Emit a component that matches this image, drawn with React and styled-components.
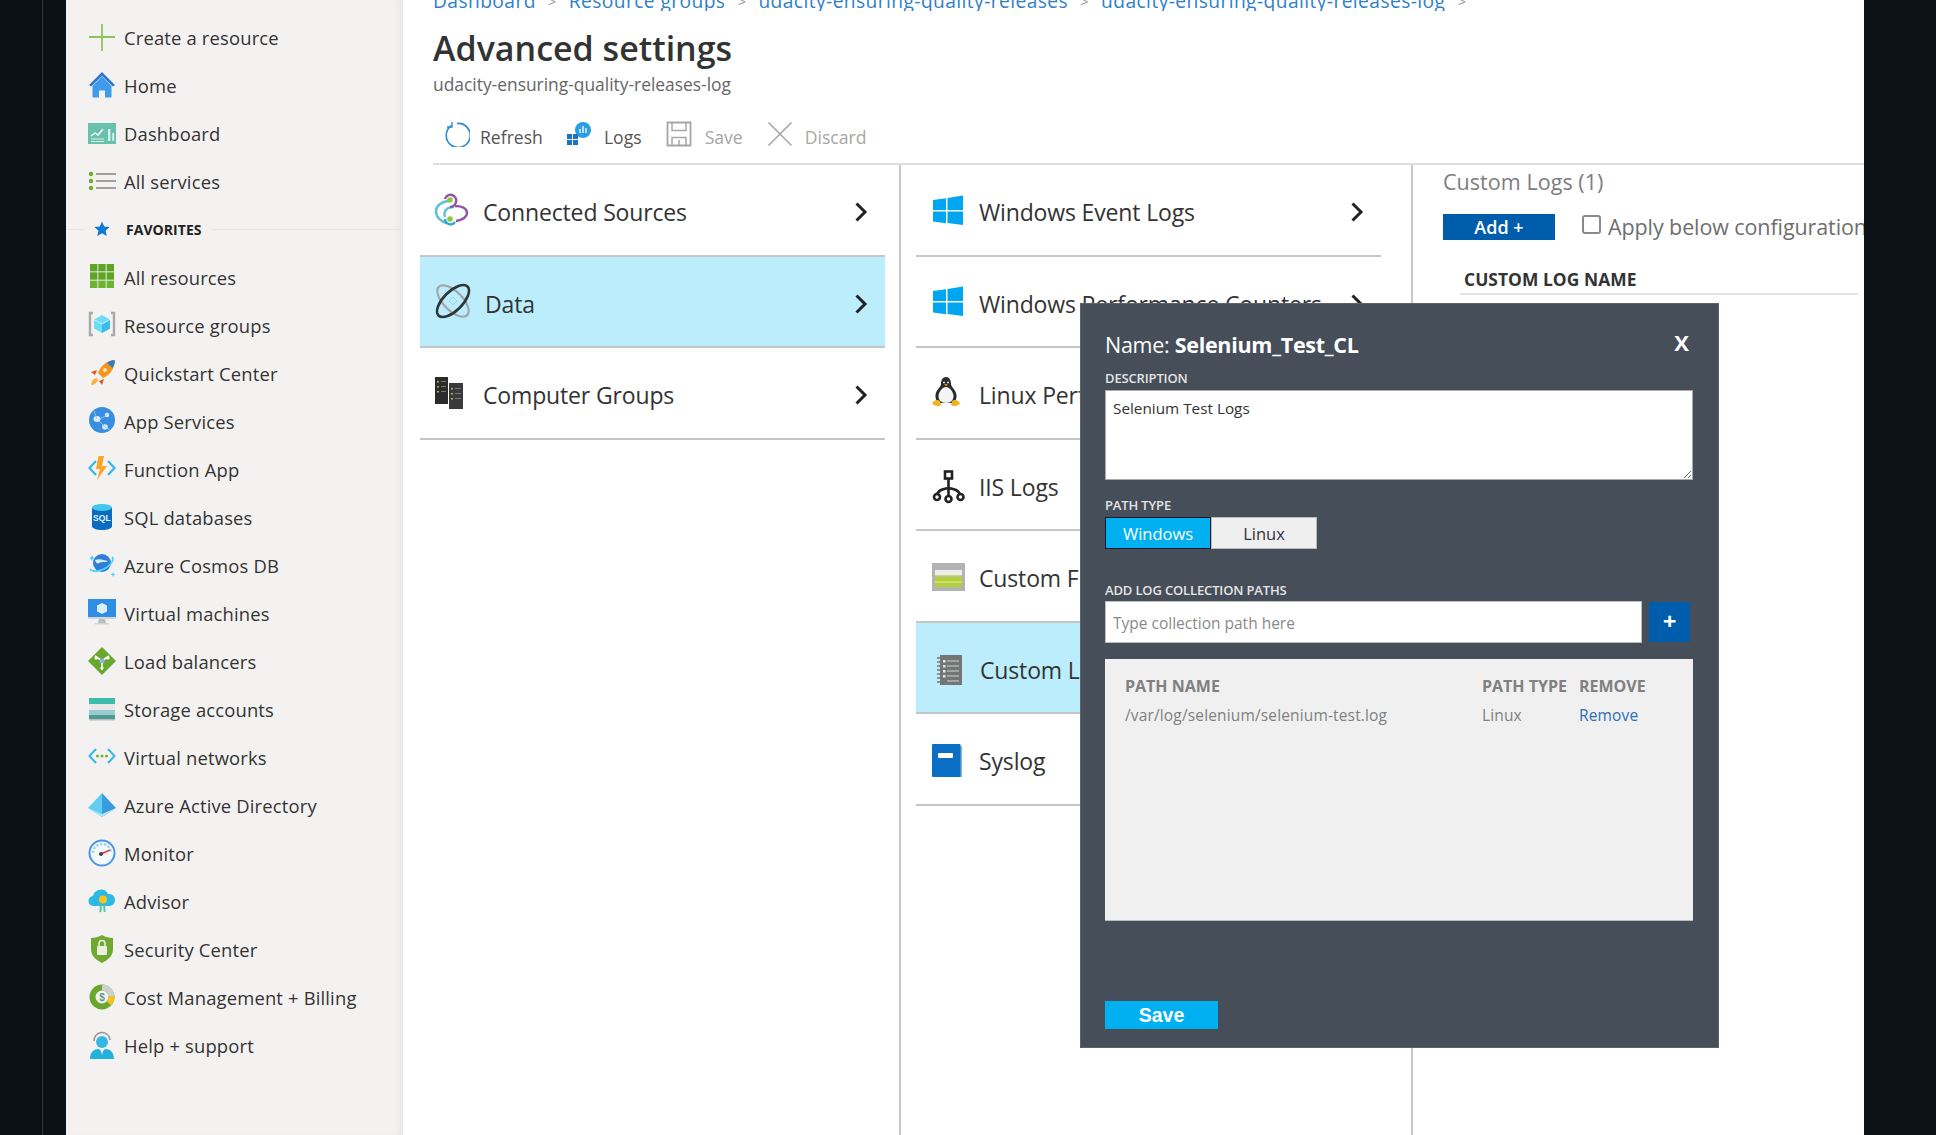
import React from "react";
import styled, { createGlobalStyle } from "styled-components";

const Global = createGlobalStyle`
  html, body { margin: 0; padding: 0; background: #0c1017; }
  * { box-sizing: border-box; }
  body { font-family: "Open Sans", "Noto Sans", sans-serif; }
`;

const Page = styled.div`
  display: flex; width: 1936px; height: 1135px; overflow: hidden; background: #0c1017; position: relative;
`;
const Gutter = styled.div`
  width: 66px; flex: none;
  &::before { content: ""; display: block; width: 42px; height: 100%; border-right: 1px solid #33363c; }
`;
const RightGutter = styled.div`width: 72px; flex: none; background: #0d1118;`;

const Sidebar = styled.nav`
  width: 337px; flex: none; background: #f3f2f1; padding-top: 14px;
  box-shadow: inset -8px 0 8px -6px rgba(0,0,0,.07);
`;
const NavRow = styled.div`
  display: flex; align-items: center; height: 48px; padding-left: 22px; gap: 8px;
  color: #333; font-size: 18.4px; letter-spacing: 0.17px; white-space: nowrap;
`;
const NavIcon = styled.svg`width: 28px; height: 28px; flex: none; position: relative; top: -1px;`;
const NavLabel = styled.span`position: relative; top: -1px;`;
const FavRow = styled.div`
  display: flex; align-items: center; height: 46px; margin-bottom: 2px; gap: 9px;
  color: #222; font-size: 14px; font-weight: 700; letter-spacing: 0.05px;
  &::before { content: ""; width: 19px; height: 1px; background: #e8e7e6; }
  &::after { content: ""; flex: 1; height: 1px; background: #e8e7e6; }
`;
const FavStar = styled.svg`width: 16px; height: 16px; margin-right: 7px; flex: none;`;

const Main = styled.main`flex: 1; min-width: 0; background: #fff; display: flex; flex-direction: column; position: relative;`;
const Crumbs = styled.div`
  height: 11px; margin-left: 30px; display: flex; align-items: flex-end; gap: 12px; overflow: hidden;
  color: #2f80c8; font-size: 19.2px; letter-spacing: 0.42px; line-height: 20px; white-space: nowrap;
`;
const CrumbSep = styled.span`color: #999; font-size: 15px;`;
const Title = styled.h1`
  margin: 15px 0 0 30px; height: 44px; line-height: 44px; font-size: 34px; font-weight: 600; color: #333; letter-spacing: 0;
`;
const Subtitle = styled.div`
  margin: 2px 0 0 30px; height: 24px; line-height: 24px; font-size: 17.4px; color: #666; letter-spacing: 0;
`;
const Toolbar = styled.div`
  margin: 17px 0 0 30px; height: 52px; border-bottom: 2px solid #e0e0e0; display: flex; padding: 5px 0 0 11px;
`;
const ToolBtn = styled.div`
  display: flex; align-items: flex-start; margin-right: ${p => p.$mr}px; color: ${p => (p.$off ? "#a6a6a6" : "#555")};
  font-size: 17.6px; letter-spacing: 0; gap: ${p => p.$gap}px; line-height: 38px;
`;
const ToolIcon = styled.svg`width: 26px; height: 26px; flex: none; margin-top: 3px;`;

const Columns = styled.div`flex: 1; display: flex; margin-left: 17px; min-height: 0;`;
const Col1 = styled.section`width: 481px; flex: none; border-right: 2px solid #c8c8c8;`;
const Col2 = styled.section`width: 512px; flex: none; padding-left: 15px; border-right: 2px solid #c8c8c8;`;
const Col3 = styled.section`flex: 1; min-width: 0; padding-left: 30px; overflow: hidden;`;
const List = styled.div`width: 465px;`;
const Row = styled.div`
  display: flex; align-items: center; height: 91.5px; border-bottom: 2px solid #c6c6c6; padding: 0 17px 0 ${p => p.$pad ?? 15}px;
  background: ${p => (p.$active ? "#bcedfd" : "transparent")};
  color: #333; font-size: 23px; letter-spacing: -0.15px; white-space: nowrap;
`;
const RowIcon = styled.svg`width: 34px; height: 34px; flex: none; overflow: visible;`;
const RowText = styled.span`margin-left: ${p => p.$ml}px; flex: 1; padding-top: 5px;`;
const Chevron = styled.svg`width: 14px; height: 20px; flex: none; margin-top: 5px;`;

const LogsTitle = styled.div`height: 34px; line-height: 34px; font-size: 21.5px; color: #7d7d7d; letter-spacing: 0.05px;`;
const AddRow = styled.div`display: flex; align-items: center; margin-top: 14px; height: 27px; white-space: nowrap;`;
const AddBtn = styled.button`
  width: 112px; height: 26px; border: 0; background: #005dab; color: #fff; font: 600 18px "Open Sans", sans-serif; padding: 0; flex: none; line-height: 26px;
`;
const Check = styled.span`
  width: 19px; height: 19px; border: 2px solid #8a8a8a; border-radius: 3px; background: #fff; margin-left: 27px; flex: none; position: relative; top: -2px;
`;
const ApplyText = styled.span`margin-left: 7px; color: #6e6e6e; font-size: 21.5px; letter-spacing: -0.1px;`;
const LogHead = styled.div`
  margin: 26px 0 0 17px; width: 398px; height: 29px; border-bottom: 2px solid #e4e4e4; padding-left: 4px;
  font-size: 17.4px; font-weight: 700; color: #333; line-height: 26px; letter-spacing: 0.05px;
`;

const Modal = styled.div`
  position: absolute; left: 677px; top: 303px; width: 639px; height: 745px; background: #464e59; padding: 0 25px 0 24px;
  border: 1px solid #5b626c; color: #fff; display: flex; flex-direction: column;
`;
const ModalHead = styled.div`
  margin-top: 25px; height: 30px; display: flex; justify-content: space-between; align-items: center; font-size: 21.5px; letter-spacing: -0.28px; padding-right: 4px;
  b { font-weight: 700; }
`;
const Close = styled.span`font-size: 22px; font-weight: 700; letter-spacing: 0; position: relative; top: -2px;`;
const Label = styled.label`
  display: block; height: 16px; line-height: 16px; font-size: 13px; font-weight: 600; color: #e4e4e4; letter-spacing: -0.15px;
  margin: ${p => p.$mt}px 0 ${p => p.$mb}px;
`;
const Area = styled.textarea`
  display: block; width: 588px; height: 90px; border: 1px solid #aaa; padding: 7px 7px; margin: 0; font: 15.3px "Open Sans", sans-serif; letter-spacing: 0; color: #333; background: #fff; outline: 0;
`;
const Seg = styled.div`display: flex;`;
const SegBtn = styled.button`
  width: 106px; height: 32px; padding: 0; font: 16.5px "Open Sans", sans-serif; letter-spacing: 0;
  background: ${p => (p.$on ? "#00b0f0" : "#efefef")}; color: ${p => (p.$on ? "#fff" : "#333")};
  border: ${p => (p.$on ? "1px solid #0a1a2a" : "1px solid #bbb")};
`;
const PathRow = styled.div`display: flex; height: 42px; gap: 7px; align-items: center;`;
const PathInput = styled.input`
  width: 537px; height: 42px; border: 1px solid #bbb; padding: 2px 7px 0; font: 15.5px "Open Sans", sans-serif; letter-spacing: 0; background: #fff; outline: 0; color: #333;
  &::placeholder { color: #8a8a8a; opacity: 1; }
`;
const PlusBtn = styled.button`
  width: 41px; height: 40px; border: 0; background: #005dab; color: #fff; font: 700 24px "Open Sans", sans-serif; padding: 0 0 4px;
`;
const PathBox = styled.div`
  margin-top: 16px; width: 588px; height: 262px; background: #f0f0f0; border-bottom: 1px solid #bbb; padding: 16px 20px 0;
`;
const PathGrid = styled.div`
  display: grid; grid-template-columns: 357px 97px auto; row-gap: 6px; color: #808080; font-size: 15.5px; letter-spacing: 0.15px; line-height: 23px;
`;
const PathTh = styled.div`font-size: 16px; font-weight: 700; letter-spacing: 0; color: #808080; white-space: nowrap;`;
const RemoveLink = styled.a`color: #2a6fb5;`;
const SaveBtn = styled.button`
  margin-top: 80px; width: 113px; height: 28px; border: 0; background: #00b0f0; color: #fff; font: 700 19.5px "Liberation Sans", sans-serif; padding: 0;
`;

const I = {
  plus: <g stroke="#8fc25c" strokeWidth="1.8"><path d="M14 1v27M1 14h26"/></g>,
  home: <g><path d="M14 1 1 14l2.2 1.5L14 5l10.8 10.500L27 14z" fill="#2878d0"/><path d="M4.500 15 14 5.600 23.500 15v10.500a1 1 0 0 1-1 1h-17a1 1 0 0 1-1-1z" fill="#3f9cec"/><path d="M11 27v-7.500h6V27z" fill="#f3f2f1"/></g>,
  dash: <g transform="translate(0 3)"><rect y="1" width="28" height="21" fill="#67c1ac"/><path d="M3 14l4-3 3 2 5-6" stroke="#fff" strokeWidth="1.400" fill="none"/><path d="M3 17h13M3 19.500h13" stroke="#d9f1ea" strokeWidth="1"/><path d="M20 19V7h2.400v12zM24.200 19v-8h2v8z" fill="#d9f1ea"/></g>,
  list: <g transform="translate(0 3)"><g fill="#6fae2c"><circle cx="3" cy="4" r="2.200"/><circle cx="3" cy="11" r="2.200"/><circle cx="3" cy="18" r="2.200"/></g><path d="M8 4h20M8 11h20M8 18h20" stroke="#a0a0a0" strokeWidth="1.800"/></g>,
  grid: <g fill="#5ea527"><rect x="2" y="1" width="7.400" height="7.400"/><rect x="10.300" y="1" width="7.400" height="7.400"/><rect x="18.600" y="1" width="7.400" height="7.400"/><rect x="2" y="9.300" width="7.400" height="7.400"/><rect x="10.300" y="9.300" width="7.400" height="7.400"/><rect x="18.600" y="9.300" width="7.400" height="7.400"/><rect x="2" y="17.600" width="7.400" height="7.400" fill="#6cb331"/><rect x="10.300" y="17.600" width="7.400" height="7.400" fill="#6cb331"/><rect x="18.600" y="17.600" width="7.400" height="7.400" fill="#6cb331"/></g>,
  group: <g><path d="M5 2H2v22h3M23 2h3v22h-3" stroke="#a9a9a9" strokeWidth="2.400" fill="none"/><path d="M14 4l8 4.500v9L14 22l-8-4.500v-9z" fill="#6fdcf7"/><path d="M14 13l8-4.500v9L14 22z" fill="#3cb9ee"/><path d="M6 8.500 14 13l8-4.500" stroke="#c9f3fd" strokeWidth="1" fill="none"/></g>,
  rocket: <g><path d="M26 1c-7 1-13 5-16 13l5 5c7-3 11-9 12-16z" fill="#f7941d"/><path d="M26 1c-3 .5-5 1.400-7 2.800L24.500 9C25.800 7 26.500 4.500 27 1.500z" fill="#2c7fc5"/><path d="M9 11l-6 2 4 3zM16 20l-2 6-3-4z" fill="#e8541f"/><path d="M8 19c-3 1-5 4-5 7 3 0 6-2 7-5z" fill="#fbb040"/><circle cx="17" cy="11" r="2" fill="#fde3b8"/></g>,
  app: <g><circle cx="14" cy="13" r="13" fill="#3a8ee0"/><ellipse cx="9" cy="12" rx="3.500" ry="3" fill="#d8ebfa"/><circle cx="19" cy="8" r="2.200" fill="#d8ebfa"/><circle cx="17" cy="20" r="2.800" fill="#d8ebfa"/><path d="M12 12l7-4M11 14l6 6M6 4l3 8M22 23l-5-3" stroke="#9fcbf1" strokeWidth=".8"/></g>,
  func: <g><path d="M8 6 1.500 13 8 20M20 6l6.500 7L20 20" stroke="#37b7ee" strokeWidth="2.200" fill="none"/><path d="M16 1H10.500L8 14h4l-3 11 10-14h-5z" fill="#f9a825"/></g>,
  sql: <g><path d="M4 4v19c0 2.500 4.500 4 10 4s10-1.500 10-4V4z" fill="#0a6cbf"/><ellipse cx="14" cy="4.500" rx="10" ry="3.500" fill="#42c8ef"/><text x="14" y="18" textAnchor="middle" fontSize="8.500" fontWeight="700" fill="#e3f1fb" fontFamily="Liberation Sans">SQL</text></g>,
  cosmos: <g><circle cx="14" cy="12" r="9" fill="#2f7fd6"/><path d="M7 9c4-2 9 0 13 1-2 2-6 0-9 2-2 1-3 0-4-3z" fill="#d4ecfb"/><path d="M24 6c3 3-2 9-8 12S4 21 2 18" stroke="#52d4f6" strokeWidth="1.800" fill="none"/><path d="M4 4l1 2 2 1-2 1-1 2-1-2-2-1 2-1zM25 21l.8 1.800 1.700.7-1.700.7-.8 1.800-.8-1.800-1.700-.7 1.700-.7z" fill="#52d4f6"/></g>,
  vm: <g><path d="M11 20h6l1 4h-8z" fill="#bcbcbc"/><path d="M7 24h14v1.500H7z" fill="#d4d4d4"/><rect width="28" height="20" fill="#2f8ee4"/><rect y="18" width="28" height="2" fill="#cfd8e0"/><path d="M14 4l5 2.500v6L14 15l-5-2.500v-6z" fill="#d8effc"/></g>,
  lb: <g><path d="M14 0 28 14 14 28 0 14z" fill="#6aa82d"/><circle cx="14" cy="14" r="2.500" fill="#8fb6e8"/><path d="M14 16v7M7 9l5 3.500M21 9l-5 3.500" stroke="#fff" strokeWidth="1.600"/><circle cx="14" cy="21" r="1.600" fill="#fff"/><circle cx="8" cy="11" r="1.500" fill="#fff"/><circle cx="20" cy="11" r="1.500" fill="#fff"/></g>,
  storage: <g transform="translate(0 2)"><rect x="1" y="1" width="26" height="6" fill="#3cbcab"/><rect x="1" y="7" width="26" height="6" fill="#e8e8e8"/><rect x="1" y="13" width="26" height="5" fill="#9cc"/><rect x="1" y="18" width="26" height="4" fill="#4c9c92"/><rect x="1" y="22" width="26" height="1.500" fill="#bbb"/></g>,
  vnet: <g transform="translate(0 3)"><path d="M8 3 1.500 10 8 17M20 3l6.500 7L20 17" stroke="#37b7ee" strokeWidth="2" fill="none"/><circle cx="9.500" cy="10" r="1.500" fill="#6cb331"/><circle cx="14" cy="10" r="1.500" fill="#6cb331"/><circle cx="18.500" cy="10" r="1.500" fill="#6cb331"/></g>,
  aad: <g transform="translate(0 2)"><path d="M14 0 0 15l14 9z" fill="#62cdf3"/><path d="M14 0l14 15-14 9z" fill="#3a9ce0"/><path d="M0 15 14 21l14-6-14 9z" fill="#a9e4f8"/></g>,
  monitor: <g><circle cx="14" cy="14" r="12.500" fill="#f6f9fc" stroke="#4a96e6" strokeWidth="2"/><path d="M5 14a9 9 0 0 1 18 0" stroke="#9dd7f3" strokeWidth="2.500" fill="none" strokeDasharray="2.500 1.500"/><path d="M13 15l9-4" stroke="#d5413c" strokeWidth="1.400"/><circle cx="13" cy="15" r="2" fill="#444"/></g>,
  advisor: <g><path d="M6 19a5 5 0 0 1-1-10 8 8 0 0 1 15-2 6 6 0 0 1 2 12z" fill="#2cb9e6"/><rect x="15" y="18" width="2" height="7" fill="#54c7a8" transform="rotate(-6 15 18)"/><rect x="12" y="18" width="2" height="7" fill="#54c7a8" transform="rotate(6 12 18)"/><circle cx="16" cy="12" r="6" fill="#2cb9e6"/><circle cx="15" cy="12.500" r="4" fill="#fcc419"/></g>,
  shield: <g><path d="M14 0c3 2 7 3 11 3v11c0 7-5 11-11 14C8 25 3 21 3 14V3c4 0 8-1 11-3z" fill="#6fa92f"/><rect x="9" y="11" width="10" height="9" rx="1" fill="#e9f1dc"/><path d="M11 11V8.500a3 3 0 0 1 6 0V11" stroke="#e9f1dc" strokeWidth="1.600" fill="none"/></g>,
  cost: <g><circle cx="14" cy="14" r="9.500" fill="none" stroke="#6aa82d" strokeWidth="6"/><path d="M14 4.500A9.500 9.500 0 0 1 23.400 13" stroke="#cfcfcf" strokeWidth="6" fill="none"/><path d="M23.400 13A9.500 9.500 0 0 1 21 20.500" stroke="#fac020" strokeWidth="6" fill="none"/><text x="14" y="18" textAnchor="middle" fontSize="10" fontWeight="700" fill="#5a9b8c" fontFamily="Liberation Sans">$</text></g>,
  help: <g><path d="M6 10a8 8 0 0 1 16-1" stroke="#9a9a9a" strokeWidth="1.600" fill="none"/><circle cx="14" cy="11" r="6" fill="#34b7e4"/><path d="M2 28c0-7 4-10 9-10l3 3 3-3c5 0 9 3 9 10z" fill="#22b0dc"/><path d="M13 20h2l-1 4z" fill="#f3f2f1"/></g>,
  win: <g fill="#00a6ef"><path d="M1 7l13-1.800V17H1zM15.500 5 31 2.500V17H15.500zM1 18.500h13v11.800L1 28.500zM15.500 18.500H31V32l-15.500-2z"/></g>,
  linux: <g><path d="M17 1c-4 0-5 4-5 7 0 3-5 6-5.500 11-.4 4 2 8 3 8h15c1 0 3.400-4 3-8-.5-5-5.500-8-5.500-11 0-3-1-7-5-7z" fill="#2a2a2a"/><path d="M17 11c-3.500 0-7.500 5-7.500 9s2.500 7 7.500 7 7.500-3 7.500-7-4-9-7.500-9z" fill="#f4f4f4"/><path d="M14 6.500h2M18 6.500h2" stroke="#ddd" strokeWidth="1.300"/><path d="M15 8.500l2 1.500 2-1.500-2-.5z" fill="#e8a71c"/><path d="M3 27c2-3 6-4 8-2l1 4c-2 2-8 1-9-2zM31 27c-2-3-6-4-8-2l-1 4c2 2 8 1 9-2z" fill="#eeb41f"/></g>,
  iis: <g fill="none" stroke="#222" strokeWidth="2.600"><rect x="13" y="1.500" width="7" height="7"/><path d="M16.500 8.500v17M5 25c1-5 6-6 11.500-7 5.500 1 10.500 2 11.500 7"/><circle cx="5" cy="27" r="3"/><circle cx="16.500" cy="29" r="3"/><circle cx="28.500" cy="27" r="3"/></g>,
  fields: <g><rect y="1" width="33" height="28" fill="#b3b3b3"/><rect x="3" y="8" width="27" height="5" fill="#ededed"/><rect x="3" y="13" width="27" height="1.500" fill="#c7d57f"/><rect x="3" y="15" width="27" height="10" fill="#b5cf3b"/><rect x="3" y="19.500" width="27" height="1" fill="#e3edb0"/></g>,
  logs: <g><rect x="6" y="2" width="22" height="30" fill="#757575"/><path d="M3 5h6M3 9h6M3 13h6M3 17h6M3 21h6M3 25h6M3 29h6" stroke="#757575" strokeWidth="1.600"/><g stroke="#c8d6d6" strokeWidth="1.200"><path d="M13 8h12M13 13h12M13 18h12M13 23h12M13 28h12"/></g><g fill="#dfe8e8"><rect x="9" y="7" width="2.500" height="2.500"/><rect x="9" y="12" width="2.500" height="2.500"/><rect x="9" y="17" width="2.500" height="2.500"/><rect x="9" y="22" width="2.500" height="2.500"/></g></g>,
  syslog: <g><path d="M28 1v32h2V3z" fill="#7fb3dd"/><rect y="0" width="28.500" height="33" rx="1" fill="#0a6fc4"/><rect x="6" y="9" width="15" height="5" rx="1" fill="#fff"/></g>,
  conn: <g fill="none" strokeWidth="2.400"><path d="M13 8C6 9 1 13 1 18c0 6 5 11 11 12" stroke="#5cc0d8"/><path d="M10 26a5.500 5.500 0 0 0 10 3" stroke="#25a9c8"/><path d="M19 14c-7 0-11 4-9 10" stroke="#5cc0d8"/><path d="M10 6a5.500 5.500 0 0 1 11 3c0 3-4 5-6 5" stroke="#8f54a8"/><path d="M20 13c6 0 12 2 12 7s-6 7-11 8" stroke="#8f54a8"/><circle cx="15" cy="7" r="2.800" fill="#8ec63f" stroke="none"/><circle cx="15" cy="26" r="2.800" fill="#8ec63f" stroke="none"/></g>,
  data: <g fill="none"><ellipse cx="17" cy="17" rx="20" ry="9.500" transform="rotate(45 17 17)" stroke="#a2a7a8" strokeWidth="2.200"/><ellipse cx="17" cy="17" rx="20.500" ry="9.500" transform="rotate(-45 17 17)" stroke="#2f3638" strokeWidth="2.600"/><path d="M17 13l4 4-4 4-4-4z" stroke="#9ed4ea" strokeWidth="1"/></g>,
  comps: <g><rect y="1" width="13" height="27" fill="#2b2b2b"/><rect x="14" y="7" width="14" height="26" fill="#3a3a3a"/><g fill="#8ec63f"><rect x="2" y="5" width="2" height="1.500"/><rect x="2" y="10" width="2" height="1.500"/><rect x="2" y="15" width="2" height="1.500"/><rect x="16" y="12" width="2" height="1.500"/><rect x="16" y="17" width="2" height="1.500"/><rect x="16" y="22" width="2" height="1.500"/></g><path d="M6 5.500h5M6 10.500h5M6 15.500h5M20 12.500h6M20 17.500h6M20 22.500h6" stroke="#777" strokeWidth="1"/></g>,
};

const nav = [
  ["Create a resource", I.plus], ["Home", I.home], ["Dashboard", I.dash], ["All services", I.list],
  null,
  ["All resources", I.grid], ["Resource groups", I.group], ["Quickstart Center", I.rocket], ["App Services", I.app],
  ["Function App", I.func], ["SQL databases", I.sql], ["Azure Cosmos DB", I.cosmos], ["Virtual machines", I.vm],
  ["Load balancers", I.lb], ["Storage accounts", I.storage], ["Virtual networks", I.vnet], ["Azure Active Directory", I.aad],
  ["Monitor", I.monitor], ["Advisor", I.advisor], ["Security Center", I.shield], ["Cost Management + Billing", I.cost], ["Help + support", I.help],
];

const Chev = () => (
  <Chevron viewBox="0 0 14 20"><path d="M2.500 1.500 11 10l-8.500 8.500" fill="none" stroke="#222" strokeWidth="3"/></Chevron>
);
const PanelRow = ({ icon, text, active, ml = 14, pad, box = "0 0 34 34" }) => (
  <Row $active={active} $pad={pad}>
    <RowIcon viewBox={box}>{icon}</RowIcon>
    <RowText $ml={ml}>{text}</RowText>
    <Chev />
  </Row>
);

export default function App() {
  return (
    <Page>
      <Global />
      <Gutter />
      <Sidebar>
        {nav.map((n, i) =>
          n ? (
            <NavRow key={i}><NavIcon viewBox="0 0 28 28">{n[1]}</NavIcon><NavLabel>{n[0]}</NavLabel></NavRow>
          ) : (
            <FavRow key={i}>
              <FavStar viewBox="0 0 18 18"><path d="M9 .5l2.500 5.700 6 .6-4.500 4.100 1.300 6.100L9 13.900 3.700 17 5 10.900.5 6.800l6-.6z" fill="#0f78d4"/></FavStar>
              <span>FAVORITES</span>
            </FavRow>
          )
        )}
      </Sidebar>
      <Main>
        <Crumbs>
          <span>Dashboard</span><CrumbSep>&gt;</CrumbSep>
          <span>Resource groups</span><CrumbSep>&gt;</CrumbSep>
          <span>udacity-ensuring-quality-releases</span><CrumbSep>&gt;</CrumbSep>
          <span>udacity-ensuring-quality-releases-log</span><CrumbSep>&gt;</CrumbSep>
        </Crumbs>
        <Title>Advanced settings</Title>
        <Subtitle>udacity-ensuring-quality-releases-log</Subtitle>
        <Toolbar>
          <ToolBtn $mr={23} $gap={10}>
            <ToolIcon viewBox="0 0 26 26"><path d="M7.500 3.500A12 12 0 1 0 13 1.500" fill="none" stroke="#2a8ad4" strokeWidth="1.600" transform="translate(0 1)"/><path d="M8 1v5H3" fill="none" stroke="#2a8ad4" strokeWidth="1.400"/></ToolIcon>Refresh
          </ToolBtn>
          <ToolBtn $mr={24} $gap={12}>
            <ToolIcon viewBox="0 0 26 26"><circle cx="17" cy="9" r="8" fill="#2a9fe8"/><path d="M14 12V8M17 12V5M20 12V7" stroke="#fff" strokeWidth="1.300"/><g fill="#1c72c8"><rect x="1" y="13" width="5" height="5"/><rect x="1" y="19" width="5" height="5"/><rect x="7" y="19" width="5" height="5"/><rect x="7" y="13" width="5" height="5"/></g></ToolIcon>Logs
          </ToolBtn>
          <ToolBtn $off $mr={24} $gap={13}>
            <ToolIcon viewBox="0 0 26 26"><path d="M1.500 1.500h23v23h-23z" fill="none" stroke="#a6a6a6" strokeWidth="1.800"/><path d="M6 1.500v8h14v-8M6 24.500v-8h14v8M13 19v5" fill="none" stroke="#a6a6a6" strokeWidth="1.500"/></ToolIcon>Save
          </ToolBtn>
          <ToolBtn $off $mr={0} $gap={12}>
            <ToolIcon viewBox="0 0 26 26"><path d="M1.500 1.500l23 23M24.500 1.500l-23 23" stroke="#a6a6a6" strokeWidth="1.600"/></ToolIcon>Discard
          </ToolBtn>
        </Toolbar>
        <Columns>
          <Col1>
            <List>
              <PanelRow icon={I.conn} text="Connected Sources" />
              <PanelRow icon={I.data} text="Data" active ml={15} pad={16} />
              <PanelRow icon={I.comps} text="Computer Groups" />
            </List>
          </Col1>
          <Col2>
            <List>
              <PanelRow icon={I.win} text="Windows Event Logs" pad={16} ml={13} />
              <PanelRow icon={I.win} text="Windows Performance Counters" pad={16} ml={13} />
              <PanelRow icon={I.linux} box="3 0 34 34" text="Linux Performance Counters" pad={16} ml={13} />
              <PanelRow icon={I.iis} box="0 -3 34 34" text="IIS Logs" pad={16} ml={13} />
              <PanelRow icon={I.fields} box="0 -3 34 34" text="Custom Fields" pad={16} ml={13} />
              <PanelRow icon={I.logs} box="-1 -3 34 34" text="Custom Logs" active pad={17} ml={13} />
              <PanelRow icon={I.syslog} box="0 -2 34 34" text="Syslog" pad={16} ml={13} />
            </List>
          </Col2>
          <Col3>
            <LogsTitle>Custom Logs (1)</LogsTitle>
            <AddRow>
              <AddBtn>Add +</AddBtn>
              <Check />
              <ApplyText>Apply below configuration to my Linux machines</ApplyText>
            </AddRow>
            <LogHead>CUSTOM LOG NAME</LogHead>
          </Col3>
        </Columns>
        <Modal>
          <ModalHead><span>Name: <b>Selenium_Test_CL</b></span><Close>X</Close></ModalHead>
          <Label $mt={11} $mb={4}>DESCRIPTION</Label>
          <Area defaultValue="Selenium Test Logs" />
          <Label $mt={17} $mb={4}>PATH TYPE</Label>
          <Seg><SegBtn $on>Windows</SegBtn><SegBtn>Linux</SegBtn></Seg>
          <Label $mt={33} $mb={3}>ADD LOG COLLECTION PATHS</Label>
          <PathRow><PathInput placeholder="Type collection path here" /><PlusBtn>+</PlusBtn></PathRow>
          <PathBox>
            <PathGrid>
              <PathTh>PATH NAME</PathTh><PathTh>PATH TYPE</PathTh><PathTh>REMOVE</PathTh>
              <div>/var/log/selenium/selenium-test.log</div><div>Linux</div><RemoveLink>Remove</RemoveLink>
            </PathGrid>
          </PathBox>
          <SaveBtn>Save</SaveBtn>
        </Modal>
      </Main>
      <RightGutter />
    </Page>
  );
}
